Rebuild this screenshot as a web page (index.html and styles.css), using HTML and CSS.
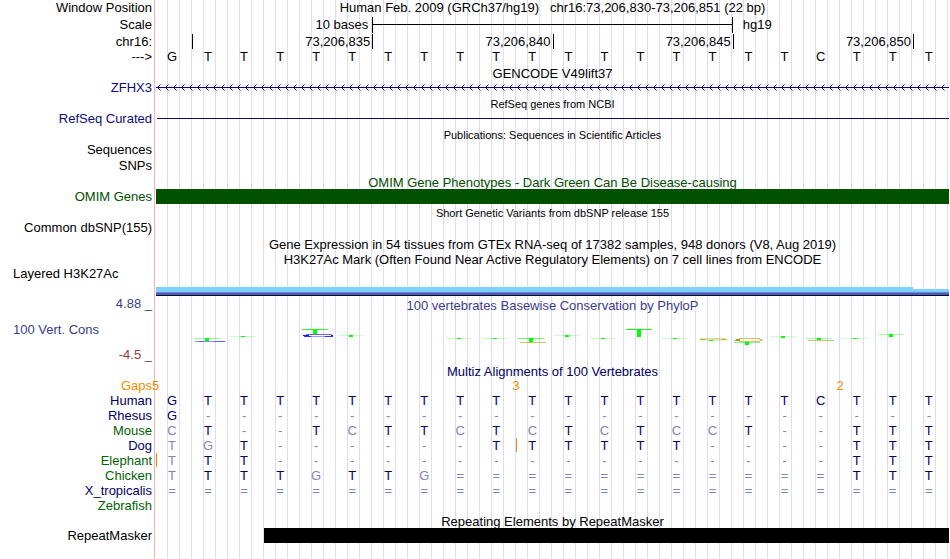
FILE: index.html
```html
<!DOCTYPE html>
<html lang="en">

<head>
    <meta charset="UTF-8">
    <meta name="viewport" content="width=device-width, initial-scale=1.0">
    <title>Human chr16:73,206,830-73,206,851 Genome Browser</title>
    <link rel="stylesheet" href="styles.css">
    <script src="script.js" defer></script>
</head>

<body>
    <main class="browser">

        <!-- Position and ruler -->
        <div class="row tall">
            <div class="label">Window Position</div>
            <div class="center">Human Feb. 2009 (GRCh37/hg19) &nbsp; chr16:73,206,830-73,206,851 (22 bp)</div>
        </div>
        <div class="row tall">
            <div class="label">Scale</div>
            <div class="scale">
                <span class="scale-size">10 bases</span>
                <span class="scale-bar"></span>
                <span class="scale-db">hg19</span>
            </div>
        </div>
        <div class="row">
            <div class="label">chr16:</div>
            <div class="ruler">
                <span></span>
                <span></span>
                <span>73,206,835</span>
                <span>73,206,840</span>
                <span>73,206,845</span>
                <span>73,206,850</span>
                <span></span>
            </div>
        </div>
        <table class="bases reference">
            <tbody>
                <tr data-seq="GTTTTTTTTTTTTTTTTTCTTT"><th scope="row">---&gt;</th></tr>
            </tbody>
        </table>

        <!-- Genes -->
        <h2 class="title">GENCODE V49lift37</h2>
        <div class="row gene">
            <div class="label">ZFHX3</div>
            <svg class="intron" aria-hidden="true">
                <defs>
                    <pattern id="strand" width="8" height="15" patternUnits="userSpaceOnUse">
                        <path d="M4.5 4.5 L1.5 7.5 L4.5 10.5" fill="none" stroke="#0c0c78" />
                    </pattern>
                </defs>
                <rect width="100%" height="15" fill="url(#strand)" />
                <rect y="7" width="100%" height="1" fill="#0c0c78" />
            </svg>
        </div>
        <h2 class="title small">RefSeq genes from NCBI</h2>
        <div class="row gene">
            <div class="label">RefSeq Curated</div>
            <div class="line"></div>
        </div>

        <h2 class="title small">Publications: Sequences in Scientific Articles</h2>
        <div class="row spaced">
            <div class="label">Sequences</div>
        </div>
        <div class="row">
            <div class="label">SNPs</div>
        </div>

        <h2 class="title omim">OMIM Gene Phenotypes - Dark Green Can Be Disease-causing</h2>
        <div class="row omim">
            <div class="label">OMIM Genes</div>
            <div class="bar"></div>
        </div>

        <h2 class="title small">Short Genetic Variants from dbSNP release 155</h2>
        <div class="row">
            <div class="label">Common dbSNP(155)</div>
        </div>

        <h2 class="title">Gene Expression in 54 tissues from GTEx RNA-seq of 17382 samples, 948 donors (V8, Aug 2019)</h2>
        <h2 class="title tight">H3K27Ac Mark (Often Found Near Active Regulatory Elements) on 7 cell lines from ENCODE</h2>
        <div class="row h3k27">
            <div class="label left">Layered H3K27Ac</div>
            <svg class="signal" viewBox="0 0 793 9" preserveAspectRatio="none" aria-hidden="true">
                <path d="M0 0 H757 V2 H793 V9 H0 Z" fill="#80d0ff" />
                <rect y="5" width="793" height="1" fill="#7878d8" />
                <rect y="6" width="793" height="2" fill="#4060b8" />
                <rect y="8" width="793" height="1" fill="#080828" />
            </svg>
        </div>

        <!-- Conservation -->
        <div class="row cons">
            <div class="label">4.88 _</div>
            <h2 class="center title-text">100 vertebrates Basewise Conservation by PhyloP</h2>
        </div>
        <div class="row cons">
            <div class="cons-labels">
                <div class="label left">100 Vert. Cons</div>
                <div class="label low">-4.5 _</div>
            </div>
            <svg class="logo" viewBox="0 0 793 50" preserveAspectRatio="none" aria-hidden="true">
                <g fill="#00ff00">
                    <g fill-opacity="0.2">
                        <rect x="38" y="26" width="26" height="1" fill-opacity="0.45" />
                        <rect x="74" y="24" width="26" height="1" />
                        <rect x="146" y="17" width="26" height="1" fill-opacity="0.8" />
                        <rect x="182" y="23" width="26" height="1" />
                        <rect x="290" y="26" width="26" height="1" />
                        <rect x="326" y="26" width="26" height="1" />
                        <rect x="362" y="26" width="26" height="1" fill-opacity="0.6" />
                        <rect x="398" y="23" width="26" height="1" />
                        <rect x="434" y="26" width="26" height="1" />
                        <rect x="470" y="17" width="26" height="1" fill-opacity="0.9" />
                        <rect x="506" y="26" width="26" height="1" />
                        <rect x="542" y="28" width="26" height="1" />
                        <rect x="578" y="30" width="26" height="1" fill-opacity="0.45" />
                        <rect x="614" y="24" width="26" height="1" />
                        <rect x="650" y="26" width="26" height="1" fill-opacity="0.35" />
                        <rect x="686" y="26" width="26" height="1" />
                        <rect x="722" y="22" width="26" height="1" fill-opacity="0.35" />
                    </g>
                    <rect x="49" y="26" width="4" height="3" />
                    <rect x="85" y="24" width="4" height="1" />
                    <rect x="157" y="17" width="4" height="5" />
                    <rect x="193" y="23" width="4" height="2" />
                    <rect x="301" y="26" width="4" height="1" />
                    <rect x="337" y="26" width="4" height="1" />
                    <rect x="373" y="26" width="4" height="4" />
                    <rect x="409" y="23" width="4" height="2" />
                    <rect x="445" y="26" width="4" height="1" />
                    <rect x="481" y="17" width="4" height="8" />
                    <rect x="517" y="26" width="4" height="1" />
                    <rect x="553" y="28" width="4" height="1" />
                    <rect x="589" y="30" width="4" height="3" />
                    <rect x="625" y="24" width="4" height="2" />
                    <rect x="661" y="26" width="4" height="2" />
                    <rect x="697" y="26" width="4" height="1" />
                    <rect x="733" y="22" width="4" height="3" />
                </g>
                <g fill="none" stroke="#0000ff">
                    <path d="M39 29.5 H69" stroke-opacity="0.45" />
                    <path d="M43 29.5 H48 M58 29.5 H69" stroke-opacity="0.3" />
                    <path d="M150 22.5 H176" stroke-opacity="0.6" />
                    <path d="M147 23.5 H153 M175 23.5 H177" stroke-opacity="0.9" />
                    <path d="M148 24.5 H155 M169 24.5 H177" stroke-opacity="0.8" />
                    <path d="M155 24.5 H169" stroke-opacity="0.4" />
                </g>
                <g fill="none" stroke="#a89800">
                    <path d="M364 30.5 H390" stroke-opacity="0.6" />
                    <path d="M545 26.5 H570 M544 27.5 H571" stroke-opacity="0.35" />
                    <path d="M544 27.5 H549 M566 27.5 H571" stroke-opacity="0.6" />
                    <path d="M583 26.5 H604 M583 29.5 H604" stroke-opacity="0.6" />
                    <path d="M580 27.5 H584 M579 28.5 H584" />
                    <path d="M603 27.5 H606 M604 28.5 H607" stroke-opacity="0.6" />
                    <path d="M652 28.5 H678" stroke-opacity="0.55" />
                </g>
            </svg>
        </div>

        <!-- Multiz alignment, lower case marks a base that differs from human -->
        <h2 class="title multiz">Multiz Alignments of 100 Vertebrates</h2>
        <table class="bases alignment">
            <tbody>
                <tr class="gaps" data-gaps="0:5 10:3 19:2"><th scope="row">Gaps</th></tr>
                <tr data-seq="GTTTTTTTTTTTTTTTTTCTTT"><th scope="row">Human</th></tr>
                <tr data-seq="G---------------------"><th scope="row">Rhesus</th></tr>
                <tr class="alt" data-seq="cT--TcTTcTcTcTccT--TTT"><th scope="row">Mouse</th></tr>
                <tr data-seq="tgT------TTTTTT----TTT" data-insert="10"><th scope="row">Dog</th></tr>
                <tr class="alt" data-seq="tTT----------------TTT" data-insert="0"><th scope="row">Elephant</th></tr>
                <tr class="alt" data-seq="tTTTgTTg===========TTT"><th scope="row">Chicken</th></tr>
                <tr data-seq="======================"><th scope="row">X_tropicalis</th></tr>
                <tr class="alt" data-seq="                      "><th scope="row">Zebrafish</th></tr>
            </tbody>
        </table>

        <h2 class="title tight">Repeating Elements by RepeatMasker</h2>
        <div class="row repeat">
            <div class="label">RepeatMasker</div>
            <div class="repeat-track">
                <div class="bar"></div>
            </div>
        </div>
    </main>
</body>

</html>
```
FILE: styles.css
```css
* {
    box-sizing: border-box;
}

body {
    margin: 0;
    background-color: #fff;
    color: #000;
    font-family: "Liberation Sans", Arial, Helvetica, sans-serif;
    font-size: 13px;
    line-height: 15px;
}

/* red divider after the labels, then a guide line every 12px */
.browser {
    min-height: 100vh;
    padding: 0 1px 16px 0;
    background-image:
        linear-gradient(#ffb0b0, #ffb0b0),
        repeating-linear-gradient(to right, transparent 0 11px, #dcdcfa 11px 12px);
    background-position: 154px 0, 156px 0;
    background-size: 1px 100%, 100% 100%;
    background-repeat: no-repeat;
}

.row {
    display: grid;
    grid-template-columns: 152px 1fr;
    column-gap: 4px;
    min-height: 15px;
}

.tall {
    min-height: 17px;
    line-height: 16px;
}

.spaced {
    min-height: 16px;
}

.label {
    text-align: right;
    white-space: nowrap;
}

.left {
    padding-left: 13px;
    text-align: left;
}

.center {
    text-align: center;
}

.title,
.title-text {
    margin: 0;
    font-size: 13px;
    font-weight: normal;
    line-height: 16px;
}

.title {
    height: 16px;
    padding: 2px 0 0 156px;
    text-align: center;
    white-space: nowrap;
}

.title-text {
    height: 16px;
    padding-top: 2px;
}

.small {
    font-size: 11px;
    line-height: 14px;
}

.tight {
    height: 15px;
    padding-top: 1px;
}

/* scale and ruler */
.scale {
    display: grid;
    grid-template-columns: 6fr 10fr 6fr;
    height: 16px;
}

.scale-size {
    padding-right: 4px;
    text-align: right;
}

.scale-bar {
    border: solid #000;
    border-width: 0 1px;
    background: linear-gradient(#000, #000) 0 7px / 100% 1px no-repeat;
}

.scale-db {
    padding-left: 10px;
}

.ruler {
    display: grid;
    grid-template-columns: 0 1fr 5fr 5fr 5fr 5fr 1fr;
}

.ruler span {
    padding-right: 2px;
    text-align: right;
}

.ruler span:nth-child(n+3) {
    border-left: 1px solid #000;
}

.ruler span:first-child {
    padding: 0;
}

/* genes */
.gene {
    color: #0c0c78;
}

.intron {
    display: block;
    width: 100%;
    height: 15px;
}

.line {
    align-self: center;
    height: 1px;
    margin-left: 1px;
    background-color: #0c0c78;
}

.bar {
    height: 15px;
    background-color: #000;
}

.omim {
    color: #005000;
}

.omim .bar {
    background-color: #005000;
}

.h3k27 {
    height: 30px;
}

.signal {
    display: block;
    align-self: end;
    width: 100%;
    height: 9px;
}

/* conservation */
.cons {
    color: #3c3c8c;
}

.cons-labels {
    display: flex;
    flex-direction: column;
    gap: 10px;
    padding-top: 10px;
}

.low {
    color: #8c3c3c;
}

.logo {
    display: block;
    width: 100%;
    height: 50px;
}

/* bases, one column for each */
.bases {
    width: 100%;
    table-layout: fixed;
    border-collapse: collapse;
}

.bases th {
    width: 156px;
    padding: 0 4px 0 0;
    font-weight: normal;
    text-align: right;
}

.bases td {
    height: 15px;
    padding: 0 4px 0 0;
    text-align: center;
}

.multiz,
.alignment {
    color: #000064;
}

.alignment .alt th {
    color: #006400;
}

.alignment .diff {
    color: #8484b4;
}

.alignment .insert {
    background: linear-gradient(#f08c00, #f08c00) 0 0 / 1px 14px no-repeat;
}

.alignment .gaps {
    color: #f08c00;
}

.gaps td {
    text-align: left;
}

.gaps span {
    margin-left: -4px;
}

.repeat-track {
    display: grid;
    grid-template-columns: 3fr 19fr;
}

.repeat-track .bar {
    grid-column: 2;
}
```
FILE: script.js
```js
const BASES = 22;

document.querySelectorAll('.bases tr').forEach(row => {
    const seq = row.dataset.seq || '';
    const gaps = new Map((row.dataset.gaps || '').split(' ').map(gap => gap.split(':')));

    for (let i = 0; i < BASES; i++) {
        const cell = row.insertCell();
        const base = seq[i] || '';

        cell.textContent = base.toUpperCase();

        // mismatches, gaps and unaligned bases are lighter
        if (/[a-z=-]/.test(base)) {
            cell.className = 'diff';
        }
        if (row.dataset.insert === String(i)) {
            cell.classList.add('insert');
        }
        if (gaps.has(String(i))) {
            const count = document.createElement('span');
            count.textContent = gaps.get(String(i));
            cell.append(count);
        }
    }
});
```
